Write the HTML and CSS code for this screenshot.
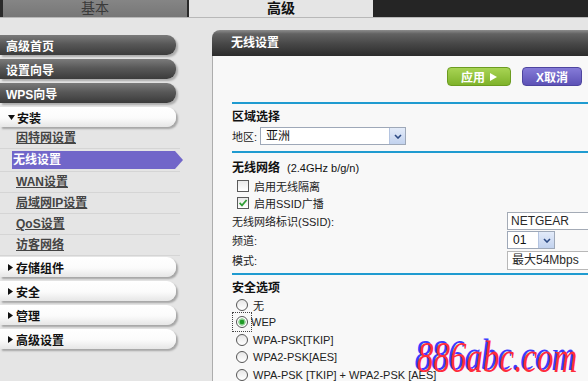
FILE: index.html
```html
<!DOCTYPE html>
<html lang="zh-CN">
<head>
<meta charset="utf-8">
<title>无线设置</title>
<link rel="stylesheet" href="styles.css">
</head>
<body>
<div class="tabs">
  <div class="tab tab-basic">基本</div>
  <div class="tab tab-adv">高级</div>
  <div class="tab-rest"></div>
</div>
<div class="layout">
  <nav class="sidebar">
    <div class="nav nav-dark">高级首页</div>
    <div class="nav nav-dark">设置向导</div>
    <div class="nav nav-dark">WPS向导</div>
    <div class="nav nav-light nav-open"><svg class="tri-down" width="7" height="5" viewBox="0 0 7 5"><polygon points="0,0 7,0 3.5,5" fill="#111"/></svg>安装</div>
    <ul class="sub">
      <li><a>因特网设置</a></li>
      <li class="active"><a>无线设置</a></li>
      <li><a>WAN设置</a></li>
      <li><a>局域网IP设置</a></li>
      <li><a>QoS设置</a></li>
      <li><a>访客网络</a></li>
    </ul>
    <div class="nav nav-light nav-gap"><svg class="tri-right" width="5" height="7" viewBox="0 0 5 7"><polygon points="0,0 5,3.5 0,7" fill="#111"/></svg>存储组件</div>
    <div class="nav nav-light"><svg class="tri-right" width="5" height="7" viewBox="0 0 5 7"><polygon points="0,0 5,3.5 0,7" fill="#111"/></svg>安全</div>
    <div class="nav nav-light"><svg class="tri-right" width="5" height="7" viewBox="0 0 5 7"><polygon points="0,0 5,3.5 0,7" fill="#111"/></svg>管理</div>
    <div class="nav nav-light"><svg class="tri-right" width="5" height="7" viewBox="0 0 5 7"><polygon points="0,0 5,3.5 0,7" fill="#111"/></svg>高级设置</div>
  </nav>
  <main class="panel">
    <div class="panel-head">无线设置</div>
    <div class="panel-body">
      <div class="actions">
        <div class="btn btn-apply">应用 <svg width="7" height="8" viewBox="0 0 7 8"><polygon points="0,0 7,4 0,8" fill="#fff"/></svg></div>
        <div class="btn btn-cancel">X取消</div>
      </div>
      <div class="rule"></div>
      <div class="sec">区域选择</div>
      <div class="region-row">
        <span class="region-label">地区:</span>
        <div class="select select-region"><span>亚洲</span><span class="arrow"><svg width="8" height="5" viewBox="0 0 8 5"><path d="M1 1 L4 4 L7 1" fill="none" stroke="#2d4b84" stroke-width="1.6"/></svg></span></div>
      </div>
      <div class="rule rule-2"></div>
      <div class="sec sec-2">无线网络<span class="note">(2.4GHz b/g/n)</span></div>
      <div class="check-row check-first"><span class="cb"></span>启用无线隔离</div>
      <div class="check-row"><span class="cb"><svg width="10" height="10" viewBox="0 0 10 10"><path d="M1.6 4.8 L4 7.4 L8.6 2" fill="none" stroke="#2f9d34" stroke-width="1.7"/></svg></span>启用SSID广播</div>
      <div class="form-row row-ssid">
        <span>无线网络标识(SSID):</span>
        <div class="input">NETGEAR</div>
      </div>
      <div class="form-row row-tall">
        <span>频道:</span>
        <div class="select select-channel"><span>01</span><span class="arrow"><svg width="8" height="5" viewBox="0 0 8 5"><path d="M1 1 L4 4 L7 1" fill="none" stroke="#2d4b84" stroke-width="1.6"/></svg></span></div>
      </div>
      <div class="form-row row-tall">
        <span>模式:</span>
        <div class="mode">最大54Mbps</div>
      </div>
      <div class="rule rule-3"></div>
      <div class="sec sec-3">安全选项</div>
      <div class="radio-row"><span class="radio"></span>无</div>
      <div class="radio-row"><span class="focus"><span class="radio checked"></span></span>WEP</div>
      <div class="radio-row"><span class="radio"></span>WPA-PSK[TKIP]</div>
      <div class="radio-row"><span class="radio"></span>WPA2-PSK[AES]</div>
      <div class="radio-row"><span class="radio"></span>WPA-PSK [TKIP] + WPA2-PSK [AES]</div>
    </div>
  </main>
</div>
<div class="watermark">886abc.com</div>
</body>
</html>
```
FILE: styles.css
```css
html, body {
  margin: 0;
  height: 100%;
  overflow: hidden;
}
body {
  position: relative;
  background: #e5e5e5;
  font-family: "Liberation Sans", "Noto Sans CJK SC", sans-serif;
  font-size: 11px;
  color: #222;
}

/* top tabs */
.tabs {
  display: flex;
  height: 17px;
  border-bottom: 1px solid #b8b8b8;
}
.tab {
  font-size: 14px;
  line-height: 17px;
  text-align: center;
  box-sizing: border-box;
}
.tab-basic {
  width: 189px;
  background: linear-gradient(#858585, #777);
  border-left: 3px solid #2a2a2a;
  border-right: 2px solid #2a2a2a;
  color: #3a3a3a;
}
.tab-adv {
  width: 184px;
  font-weight: bold;
  color: #111;
}
.tab-rest {
  flex: 1;
  background: #252525;
}

/* layout */
.layout {
  display: flex;
  align-items: flex-start;
}
.sidebar {
  flex: none;
  width: 180px;
  margin-top: 17px;
  margin-right: 32px;
}
.panel {
  flex: 1;
  margin-top: 12px;
  min-width: 0;
}

/* sidebar */
.nav {
  display: flex;
  align-items: center;
  width: 176px;
  height: 20px;
  box-sizing: border-box;
  padding-left: 6px;
  margin-bottom: 4px;
  border-radius: 0 9px 9px 0;
  font-size: 12px;
  font-weight: bold;
}
.nav-dark {
  background: linear-gradient(#7b7b7b, #585858 45%, #3b3b3b);
  color: #fff;
  box-shadow: 2px 2px 2px rgba(0, 0, 0, .25);
}
.nav-light {
  background: linear-gradient(#fff, #fbfbfb 55%, #e6e6e6);
  color: #111;
  padding-left: 8px;
  box-shadow: 2px 2px 2px rgba(0, 0, 0, .28);
}
.nav-open {
  margin-bottom: 1px;
}
.nav-gap {
  margin-top: 1px;
}
.tri-down {
  margin-right: 2px;
}
.tri-right {
  margin-right: 3px;
}
.sub {
  list-style: none;
  margin: 0;
  padding: 0;
}
.sub li {
  height: 20px;
  border-bottom: 1px solid #d5d5d5;
  padding-left: 16px;
  font-size: 12px;
  font-weight: bold;
  line-height: 20px;
}
.sub li a {
  color: #444;
  text-decoration: underline;
}
.sub li.active {
  padding-left: 12px;
}
.sub li.active a {
  display: block;
  margin-top: 2px;
  width: 171px;
  height: 18px;
  line-height: 18px;
  padding-left: 1px;
  box-sizing: border-box;
  background: #7166c9;
  color: #fff;
  text-decoration: none;
  clip-path: polygon(0 0, calc(100% - 8px) 0, 100% 50%, calc(100% - 8px) 100%, 0 100%);
}

/* panel */
.panel-head {
  height: 26px;
  line-height: 26px;
  padding-left: 19px;
  border-radius: 8px 0 0 0;
  background: linear-gradient(#8c8c8c, #626262 15%, #464646 55%, #2c2c2c);
  color: #fff;
  font-size: 12px;
  font-weight: bold;
}
.panel-body {
  background: #f8f8f8;
  border-left: 1px solid #adadad;
  padding-left: 19px;
  height: 340px;
}
.actions {
  display: flex;
  justify-content: flex-end;
  gap: 11px;
  padding-top: 11px;
  padding-right: 6px;
}
.btn {
  display: flex;
  align-items: center;
  justify-content: center;
  gap: 5px;
  height: 19px;
  box-sizing: border-box;
  border-radius: 4px;
  color: #fff;
  font-size: 12px;
  font-weight: bold;
}
.btn-apply {
  width: 64px;
  background: linear-gradient(#a8d454, #7eb22a);
  border: 1px solid #6c9c20;
}
.btn-cancel {
  width: 60px;
  background: linear-gradient(#857bd8, #5d52b6);
  border: 1px solid #4e459f;
  gap: 0;
}
.rule {
  height: 2px;
  margin-top: 16px;
  background: #1f9bd0;
}
.rule-2 {
  margin-top: 6px;
}
.rule-3 {
  margin-top: 3px;
}
.sec {
  margin-top: 5px;
  height: 16px;
  line-height: 16px;
  font-size: 12px;
  font-weight: bold;
  color: #111;
}
.sec-2 {
  margin-top: 7px;
}
.note {
  margin-left: 7px;
  font-size: 11px;
  font-weight: normal;
}
.region-row {
  display: flex;
  align-items: center;
  margin-top: 2px;
  height: 18px;
}
.region-label {
  width: 28px;
}
.select {
  display: flex;
  justify-content: space-between;
  align-items: stretch;
  height: 18px;
  box-sizing: border-box;
  border: 1px solid #9ea8b8;
  background: #fff;
  font-size: 12px;
  line-height: 16px;
  color: #111;
}
.select > span:first-child {
  padding-left: 5px;
}
.select-region {
  width: 146px;
}
.select-channel {
  width: 48px;
}
.arrow {
  display: flex;
  align-items: center;
  justify-content: center;
  width: 15px;
  background: linear-gradient(#e3ebf9, #c2d2ee);
  border-left: 1px solid #b4c4e0;
}
.check-row {
  display: flex;
  align-items: center;
  height: 17px;
  padding-left: 5px;
}
.check-first {
  margin-top: 1px;
}
.cb {
  display: flex;
  align-items: center;
  justify-content: center;
  width: 12px;
  height: 12px;
  box-sizing: border-box;
  margin-right: 5px;
  border: 1px solid #5a5a5a;
  background: linear-gradient(#e8e8e8, #fff);
}
.form-row {
  display: grid;
  grid-template-columns: 275px 120px;
  align-items: center;
  height: 20px;
}
.row-ssid {
  height: 19px;
}
.input {
  height: 18px;
  box-sizing: border-box;
  border: 1px solid #a4abb6;
  background: #fff;
  padding-left: 3px;
  font-size: 12px;
  line-height: 16px;
  color: #2a2a2a;
}
.mode {
  height: 19px;
  box-sizing: border-box;
  border: 1px solid #b8b8b8;
  background: #fff;
  padding-left: 4px;
  font-size: 12px;
  line-height: 17px;
  color: #2a2a2a;
}
.radio-row {
  display: flex;
  align-items: center;
  height: 17.5px;
  padding-left: 4px;
  white-space: nowrap;
}
.radio {
  display: block;
  width: 12px;
  height: 12px;
  box-sizing: border-box;
  margin-right: 5px;
  border: 1px solid #555;
  border-radius: 50%;
  background: linear-gradient(#e6e6e6, #fff);
}
.focus {
  display: block;
  outline: 1px dotted #444;
  outline-offset: 3px;
  margin-right: 3px;
}
.focus .radio {
  margin-right: 0;
}
.radio.checked {
  background: radial-gradient(circle, #1e9a24 0 2px, #8fd093 2.6px 3.4px, #fff 4px);
}

/* watermark overlay */
.watermark {
  position: absolute;
  left: 417px;
  top: 335px;
  font-family: "Liberation Serif", serif;
  font-style: italic;
  font-size: 44px;
  line-height: 46px;
  color: #ff2c3c;
  text-shadow: -3px -2px 0 #3b3bff;
  transform: scaleX(.75);
  transform-origin: left top;
  white-space: nowrap;
}
```
